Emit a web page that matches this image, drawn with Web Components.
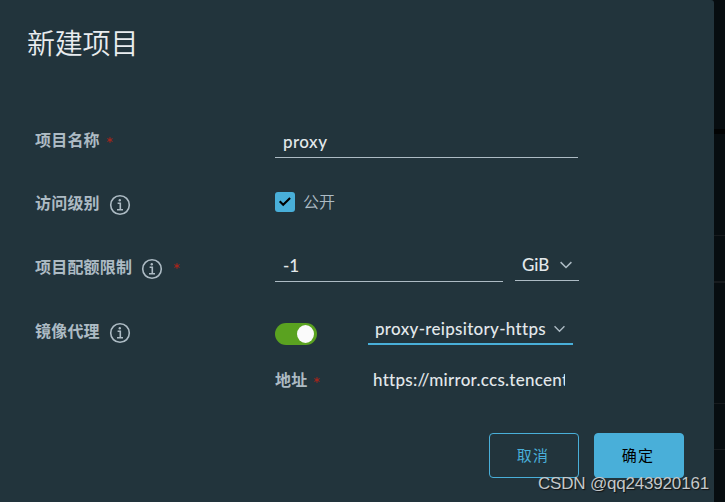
<!DOCTYPE html>
<html lang="zh-CN">
<head>
<meta charset="utf-8">
<title>新建项目</title>
<style>
html,body{margin:0;width:725px;height:502px;overflow:hidden;background:#080d10}
body{font-family:Lato,"Noto Sans CJK SC",sans-serif}
</style>
</head>
<body>
<project-dialog></project-dialog>
<script>
const define=(name,html)=>customElements.define(name,class extends HTMLElement{
  constructor(){
    super();
    const t=document.createElement('template');
    t.innerHTML=html;
    this.attachShadow({mode:'open'}).append(t.content.cloneNode(true));
  }
});

define('info-icon',`<style>:host{display:block;width:22px;height:22px}svg{display:block}</style>
<svg width="22" height="22" viewBox="0 0 22 22" fill="none" stroke="#adbbc4" stroke-width="1.6"><circle cx="11" cy="11" r="9.3"/><path d="M8.6 9.3H11.3V15.6M8 15.7H14"/><circle cx="10.8" cy="6.2" r="1.2" fill="#adbbc4" stroke="none"/></svg>`);

define('required-mark',`<style>:host{display:block;width:6px;height:6px}svg{display:block}</style>
<svg width="6" height="6" viewBox="0 0 6 6" stroke="#b0241a" stroke-width="1"><path d="M3 .2V5.8M.4 1.6L5.6 4.4M5.6 1.6L.4 4.4"/></svg>`);

define('chevron-icon',`<style>:host{display:block;width:12px;height:8px}svg{display:block;width:100%;height:100%}</style>
<svg viewBox="0 0 12 8" fill="none" stroke="#adbbc4" stroke-width="1.5"><path d="M.6 1.1L6 6.5L11.4 1.1"/></svg>`);

define('form-row',`<style>
:host{display:grid;grid-template-columns:240px 1fr;height:64px;margin-left:35px}
.label{display:flex;align-items:center;height:62px;font-size:16px;font-weight:700;line-height:24px;letter-spacing:.2px;color:#adbbc4}
:host([raised]) .label{height:60px}
.control{display:flex;align-items:flex-start}
</style><div class="label"><slot name="label"></slot></div><div class="control"><slot></slot></div>`);

define('text-field',`<style>
:host{display:block;box-sizing:border-box;height:32px;border-bottom:1px solid #adbbc4;padding:0 8px;font-size:17px;font-weight:500;line-height:31px;color:#e3e8eb;white-space:nowrap}
</style><slot></slot>`);

define('select-field',`<style>
:host{display:flex;box-sizing:border-box;height:32px;align-items:center;justify-content:space-between;border-bottom:1px solid #adbbc4;padding:0 7px;font-size:17px;font-weight:500;line-height:30px;color:#e3e8eb;white-space:nowrap}
.value{overflow:hidden}
</style><span class="value"><slot></slot></span><slot name="icon"></slot>`);

define('check-box',`<style>
:host{display:flex;align-items:center;gap:8px;font-size:16px;line-height:24px;color:#adbbc4}
.box{width:20px;height:20px;border-radius:3px;background:#49afd9}
svg{display:block}.txt{font-weight:350}
</style><div class="box"><svg width="20" height="20" viewBox="0 0 20 20" fill="none" stroke="#000" stroke-width="2.1"><path d="M4.7 9.3L8.2 12.8L15.1 6"/></svg></div><span class="txt"><slot></slot></span>`);

define('toggle-switch',`<style>
:host{display:flex;box-sizing:border-box;width:42px;height:22px;padding:2px 3px;justify-content:flex-end;border-radius:11px;background:#5aa220}
.knob{width:17px;height:18px;border-radius:50%;background:#fafafa}
</style><div class="knob"></div>`);

define('action-button',`<style>
:host{display:flex;box-sizing:border-box;width:90px;height:45px;align-items:center;justify-content:center;border:1px solid #49afd9;border-radius:4px;color:#49afd9;font-size:15px;letter-spacing:1.2px;line-height:22px;padding:0 2px 2px 0}
:host([primary]){background:#49afd9;color:#000}
</style><slot></slot>`);

define('page-edge',`<style>
:host{display:grid;grid-template-rows:129px 5px 101px 1px 45px 2px 120px 1px 45px 1px 52px;background:#070d10}
.line{background:#171b1e}.dark{background:#020303}
</style><div></div><div class="dark"></div><div></div><div class="line"></div><div></div><div class="line"></div><div></div><div class="line"></div><div></div><div class="line"></div>`);

define('project-dialog',`<style>
:host{display:grid;grid-template-columns:714px 11px;width:725px;height:502px;position:relative}
.panel{background:#22343c;border-top-right-radius:3px;height:502px;box-sizing:border-box}
h1{margin:0;height:109px;box-sizing:border-box;padding:24px 0 0 27px;font-size:28px;font-weight:350;line-height:38px;letter-spacing:-.2px;color:#e9ecef}
info-icon{margin:3px 0 0 9px}
required-mark{margin:-1px 0 0 7px}
.quota info-icon{margin-left:8.5px}
.quota required-mark{margin:-3px 0 0 11px}
.name{width:303px;margin-top:17px;letter-spacing:.45px}
check-box{margin-top:17px}
.amount{width:228px;margin-top:13px}
.unit{width:64px;margin:12px 0 0 12px;letter-spacing:-.1px}
toggle-switch{margin-top:22px}
.registry{width:205px;height:31px;border-bottom:2px solid #49afd9;margin:13px 0 0 51px;letter-spacing:.3px}
.registry chevron-icon{width:11px;height:8px;margin-right:1px}
.registry .txt{display:block;width:171px;overflow:hidden}
.address{height:60px;margin-top:-8px}
.sub{width:98px;height:46px;display:flex;align-items:center;font-size:16px;font-weight:700;line-height:24px;letter-spacing:.2px;color:#adbbc4}
.url{width:192px;height:46px;overflow:hidden;white-space:nowrap;font-size:17px;font-weight:500;line-height:46px;letter-spacing:.27px;color:#e3e8eb}
footer{display:flex;justify-content:flex-end;gap:15px;padding:16px 30px 0 0}
.mark{position:absolute;left:538px;top:473px;font:17px/22px "Liberation Sans",sans-serif;letter-spacing:-.19px;color:#c4c8ca;text-shadow:1px 1px 1px #111;white-space:nowrap}
</style>
<main class="panel">
<h1>新建项目</h1>
<form-row><span slot="label">项目名称</span><required-mark slot="label"></required-mark><text-field class="name">proxy</text-field></form-row>
<form-row raised><span slot="label">访问级别</span><info-icon slot="label"></info-icon><check-box>公开</check-box></form-row>
<form-row raised class="quota"><span slot="label">项目配额限制</span><info-icon slot="label"></info-icon><required-mark slot="label"></required-mark><text-field class="amount">-1</text-field><select-field class="unit">GiB<chevron-icon slot="icon"></chevron-icon></select-field></form-row>
<form-row raised><span slot="label">镜像代理</span><info-icon slot="label"></info-icon><toggle-switch></toggle-switch><select-field class="registry"><span class="txt">proxy-reipsitory-https</span><chevron-icon slot="icon"></chevron-icon></select-field></form-row>
<form-row class="address"><div class="sub"><span>地址</span><required-mark></required-mark></div><div class="url">https://mirror.ccs.tencent</div></form-row>
<footer><action-button>取消</action-button><action-button primary>确定</action-button></footer>
</main>
<page-edge></page-edge>
<div class="mark">CSDN @qq243920161</div>`);
</script>
</body>
</html>
